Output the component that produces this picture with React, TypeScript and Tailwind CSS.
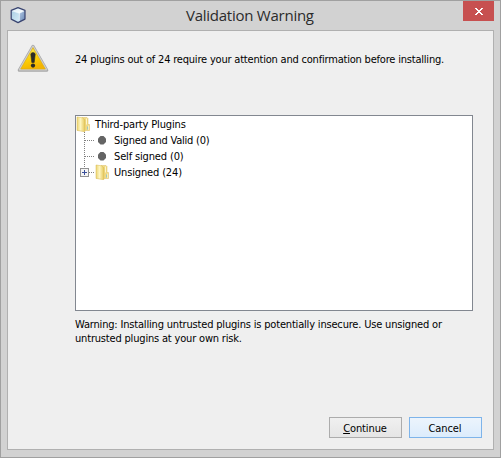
import React from 'react';

function AppIcon() {
  return (
    <svg width="16" height="18" viewBox="0 0 16 18" className="block">
      <defs>
        <linearGradient id="cubeTop" x1="0" y1="0" x2="1" y2="1">
          <stop offset="0" stopColor="#d5e9f4" />
          <stop offset="1" stopColor="#ffffff" />
        </linearGradient>
        <linearGradient id="cubeLeft" x1="0" y1="0" x2="1" y2="1">
          <stop offset="0" stopColor="#a9cde3" />
          <stop offset="1" stopColor="#d8edf8" />
        </linearGradient>
        <linearGradient id="cubeRight" x1="0" y1="0" x2="1" y2="1">
          <stop offset="0" stopColor="#b5cbe6" />
          <stop offset="1" stopColor="#6685b3" />
        </linearGradient>
      </defs>
      <path d="M8 1.6 15 4.4V13.1L8 16.6 1.2 13.1V4.4Z" fill="#cfe3f2" />
      <path d="M8 1.6 15 4.4 9.4 7.2 1.2 4.4Z" fill="url(#cubeTop)" />
      <path d="M1.2 4.4 9.4 7.2 9 16.6 1.2 13.1Z" fill="url(#cubeLeft)" />
      <path d="M15 4.4 9.4 7.2 9 16.6 15 13.1Z" fill="url(#cubeRight)" />
      <path d="M2 4.8 9.4 7.2 14.4 4.8M9.4 7.2V15" fill="none" stroke="#f4fbff" strokeWidth="0.7" />
      <path d="M8 1.6 15 4.4V13.1L8 16.6 1.2 13.1V4.4Z" fill="none" stroke="#3a4470" strokeWidth="1.2" strokeLinejoin="round" />
    </svg>
  );
}

function WarningIcon() {
  return (
    <svg width="32" height="29" viewBox="0 0 32 29" className="block">
      <defs>
        <linearGradient id="warn" x1="0" y1="0" x2="0.35" y2="1">
          <stop offset="0" stopColor="#f5e65a" />
          <stop offset="0.45" stopColor="#f8d828" />
          <stop offset="0.6" stopColor="#fdd005" />
          <stop offset="1" stopColor="#f4b400" />
        </linearGradient>
      </defs>
      <path d="M16 2.2 29.8 26.2H2.2Z" fill="#a9a9a9" stroke="#a9a9a9" strokeWidth="3" strokeLinejoin="round" />
      <path d="M16 2.4 29.4 25.6H2.6Z" fill="#cecece" stroke="#cecece" strokeWidth="1.7" strokeLinejoin="round" />
      <path d="M16 3.6 28.3 25H3.7Z" fill="url(#warn)" stroke="#dcae14" strokeWidth="0.7" strokeLinejoin="round" />
      <path d="M13.8 10.5Q13.8 8.6 16 8.6T18.2 10.5L17.2 18.5H14.8Z" fill="#2b2b26" stroke="#2b2b26" strokeWidth="0.6" />
      <circle cx="16" cy="21.6" r="2.1" fill="#2b2b26" />
    </svg>
  );
}

function FolderIcon() {
  return (
    <svg width="14" height="16" viewBox="0 0 14 16" className="block shrink-0">
      <defs>
        <linearGradient id="folder" x1="0" y1="0" x2="1" y2="0">
          <stop offset="0" stopColor="#ecd574" />
          <stop offset="0.45" stopColor="#fdf5c0" />
          <stop offset="1" stopColor="#e6c95c" />
        </linearGradient>
      </defs>
      <path d="M6 1.5H11L12 2.5V8.5H13.5V14.5H7Z" fill="#f0da84" stroke="#dcbf62" strokeWidth="0.5" />
      <path d="M10.5 2.5V8.5" stroke="#fcf5cc" strokeWidth="1" />
      <path d="M11.5 10.5V13.5" stroke="#85bfd0" strokeWidth="0.8" />
      <path d="M12.5 9.5V14" stroke="#fbf3c4" strokeWidth="0.8" />
      <path d="M1 1 6.5 1.8 8.8 3.8V15.7L1 14.4Z" fill="url(#folder)" stroke="#d8b94f" strokeWidth="0.5" />
    </svg>
  );
}

function Bullet() {
  return (
    <svg width="14" height="16" viewBox="0 0 14 16" className="block shrink-0">
      <path d="M5.5 4H8.5L11 6.5V10L8.5 12.5H5.5L3 10V6.5Z" fill="#646464" />
    </svg>
  );
}

function Branch({ last = false }: { last?: boolean }) {
  return (
    <svg width="19" height="16" viewBox="0 0 19 16" className="block shrink-0" shapeRendering="crispEdges">
      <path d={last ? 'M8.5 0V4' : 'M8.5 0V16'} stroke="#808080" strokeDasharray="1 1" />
      <path d={last ? 'M13 8.5H19' : 'M9 8.5H19'} stroke="#808080" strokeDasharray="1 1" />
      {last && (
        <>
          <rect x="4.5" y="4.5" width="8" height="8" fill="#f4f4f4" stroke="#919191" />
          <path d="M6 8.5H11M8.5 6V11" stroke="#3a4f9a" />
        </>
      )}
    </svg>
  );
}

export default function App() {
  return (
    <div className="flex h-[458px] w-[501px] flex-col border border-[#a0a0a0] bg-[#d2d2d2] px-1.5 pb-[7px] font-['DejaVu_Sans_Condensed','DejaVu_Sans',sans-serif] text-[11px] leading-4 text-black">
      <header className="flex h-[29px] shrink-0 items-start">
        <div className="w-20 pt-[5px] pl-[3px]"><AppIcon /></div>
        <h1 className="flex-1 pt-[4px] pl-[99px] font-['Open_Sans','Noto_Sans',sans-serif] text-[15px] leading-5 font-normal tracking-[-0.25px] whitespace-nowrap text-[#2b2b2b]">Validation Warning</h1>
        <button aria-label="Close" className="flex h-5 w-[31px] items-center justify-center bg-[#c75050]">
          <svg width="8" height="7" viewBox="0 0 8 7" shapeRendering="crispEdges">
            <path d="M0 0h2v1H0zM6 0h2v1H6zM1 1h2v1H1zM5 1h2v1H5zM2 2h4v1H2zM3 3h2v1H3zM2 4h4v1H2zM1 5h2v1H1zM5 5h2v1H5zM0 6h2v1H0zM6 6h2v1H6z" fill="#fff" />
          </svg>
        </button>
      </header>
      <main className="flex flex-1 flex-col border border-[#b0b0b0] bg-[#efefef] [font-stretch:condensed]">
        <div className="flex h-[84px] shrink-0">
          <div className="w-[67px] pt-[13px] pl-[9px]"><WarningIcon /></div>
          <p className="pt-[21px] tracking-[-0.2px] whitespace-nowrap">24 plugins out of 24 require your attention and confirmation before installing.</p>
        </div>
        <div className="ml-[67px] h-[196px] w-[398px] shrink-0 border border-[#828790] bg-white">
          <div className="flex h-4"><FolderIcon /><span className="pt-px pl-[5px] tracking-[-0.15px]">Third-party Plugins</span></div>
          <div className="flex h-4"><Branch /><Bullet /><span className="pt-px pl-[5px] tracking-[-0.22px]">Signed and Valid (0)</span></div>
          <div className="flex h-4"><Branch /><Bullet /><span className="pt-px pl-[5px] tracking-[-0.15px]">Self signed (0)</span></div>
          <div className="flex h-4"><Branch last /><FolderIcon /><span className="pt-px pl-[5px] tracking-[-0.15px]">Unsigned (24)</span></div>
        </div>
        <p className="mt-[7px] ml-[67px] leading-[14px] tracking-[-0.18px] whitespace-nowrap">
          Warning: Installing untrusted plugins is potentially insecure. Use unsigned or<br />untrusted plugins at your own risk.
        </p>
        <div className="mt-auto mb-[11px] flex justify-end gap-[7px] pr-[11px]">
          <button className="h-[21px] w-[73px] border border-[#acacac] bg-linear-to-b from-[#f0f0f0] to-[#e5e5e5] pt-[2px] pr-px tracking-[-0.1px]"><span className="underline">C</span>ontinue</button>
          <button className="h-[21px] w-[73px] border border-[#7eb4ea] bg-linear-to-b from-[#ecf4fc] to-[#dcecfc] pt-[2px] pr-px tracking-[-0.1px]">Cancel</button>
        </div>
      </main>
    </div>
  );
}
